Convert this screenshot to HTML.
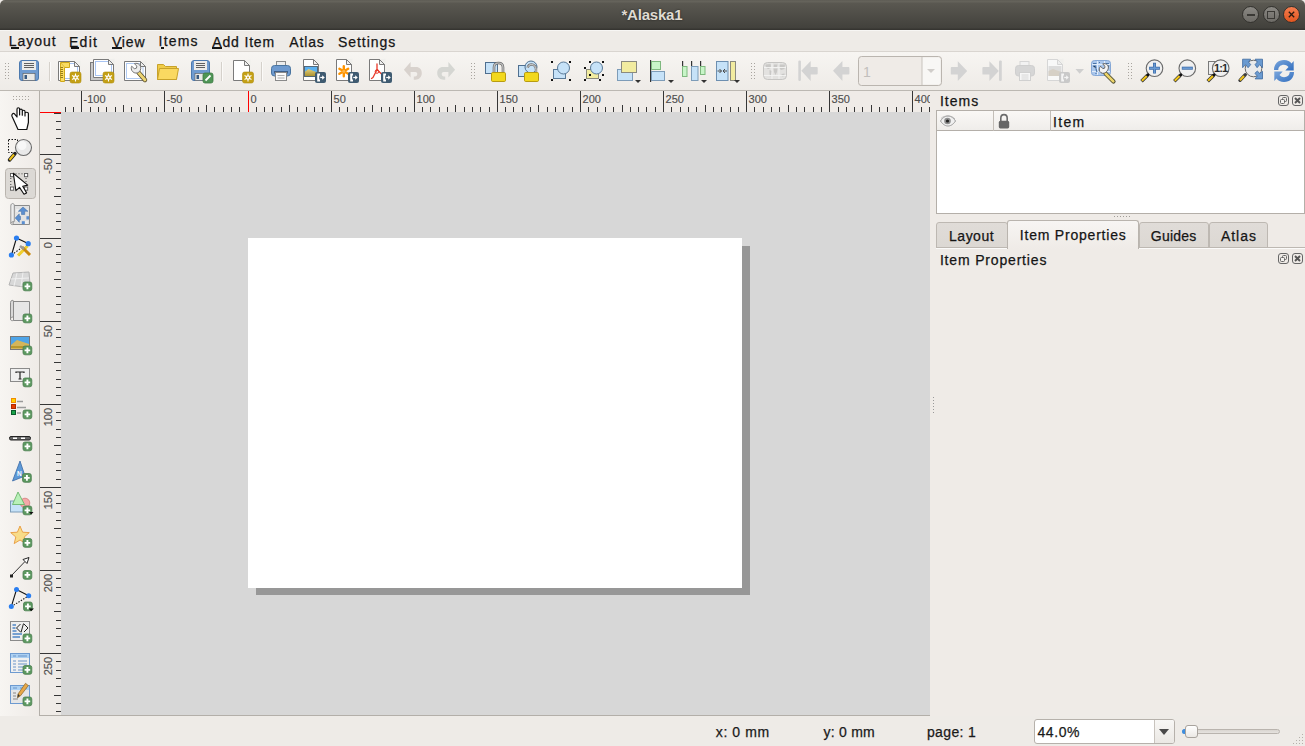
<!DOCTYPE html><html><head><meta charset="utf-8"><style>
*{margin:0;padding:0;box-sizing:border-box}
html,body{width:1305px;height:746px;overflow:hidden;background:#efebe7;font-family:"Liberation Sans",sans-serif;color:#1c1c1c}
.a{position:absolute}
#title{left:0;top:0;width:1305px;height:30px;background:linear-gradient(#5c5a53 0px,#65635b 1px,#65635b 2px,#5a5851 3px,#42413c 28px,#363531 29px,#363531 30px);border-radius:5px 5px 0 0}
#menubar{left:0;top:30px;width:1305px;height:22px;background:#eeebe7;border-top:1px solid #f7f6f4;border-bottom:1px solid #d9d5d0}
.mi{position:absolute;top:3px;font-size:14.5px;color:#151515;white-space:nowrap}
.ul{text-decoration:underline;text-underline-offset:2px}
#toolbar{left:0;top:52px;width:1305px;height:38px;background:linear-gradient(#f7f5f2,#eeebe7)}
#hline{left:0;top:90px;width:1305px;height:1px;background:#bcb8b2}
#ltool{left:0;top:91px;width:39px;height:625px;background:linear-gradient(90deg,#f7f5f2,#efebe7)}
#vborder{left:39px;top:91px;width:1px;height:625px;background:#b3afa9}
#bborder{left:39px;top:715px;width:891px;height:1px;background:#b3afa9}
#hruler{left:40px;top:91px;width:890px;height:21px;background:#efebe7;overflow:hidden}
#vruler{left:40px;top:112px;width:21px;height:603px;background:#efebe7;overflow:hidden}
#canvas{left:61px;top:112px;width:869px;height:603px;background:#d7d7d7;overflow:hidden}
.tk{position:absolute;background:#363636}
.rl{position:absolute;font-size:11px;color:#4e4e4e;white-space:nowrap;line-height:11px;-webkit-text-stroke:0.15px #4e4e4e}
#status{left:0;top:716px;width:1305px;height:30px;background:#eeebe7}
.st{position:absolute;font-size:14.5px;color:#1a1a1a;white-space:nowrap;line-height:17px}
.pt{position:absolute;font-size:14.5px;color:#151515;white-space:nowrap;line-height:17px}
#rpanel{left:930px;top:91px;width:375px;height:625px;background:#efebe7}
</style></head><body>
<div id="title" class="a">
<div class="a" style="left:1242.2px;top:6px;width:17px;height:17px;border-radius:50%;background:linear-gradient(#8a8883,#6d6b66);border:1px solid #33322e"><div class="a" style="left:4px;top:7px;width:8px;height:2px;background:#3a3935"></div></div>
<div class="a" style="left:1262.5px;top:6px;width:17px;height:17px;border-radius:50%;background:linear-gradient(#8a8883,#6d6b66);border:1px solid #33322e"><div class="a" style="left:3.5px;top:4px;width:8px;height:8px;border:1.5px solid #3a3935"></div></div>
<div class="a" style="left:1282.5px;top:6px;width:17px;height:17px;border-radius:50%;background:linear-gradient(#f47d4f,#e2561f);border:1px solid #33322e"><svg class="a" style="left:0;top:0" width="15" height="15"><path d="M4.8 4.8L10.2 10.2M10.2 4.8L4.8 10.2" stroke="#2a1a10" stroke-width="1.3"/></svg></div>
</div>
<div id="menubar" class="a"></div>
<div id="toolbar" class="a"></div>
<div id="hline" class="a"></div>
<div id="ltool" class="a"></div>
<div id="vborder" class="a"></div>
<div id="bborder" class="a"></div>
<svg class="a" style="left:0;top:0" width="1305" height="746" viewBox="0 0 1305 746"><rect x="5" y="63" width="1" height="1" fill="#a9a59f"/><rect x="8" y="63" width="1" height="1" fill="#a9a59f"/><rect x="5" y="66" width="1" height="1" fill="#a9a59f"/><rect x="8" y="66" width="1" height="1" fill="#a9a59f"/><rect x="5" y="69" width="1" height="1" fill="#a9a59f"/><rect x="8" y="69" width="1" height="1" fill="#a9a59f"/><rect x="5" y="72" width="1" height="1" fill="#a9a59f"/><rect x="8" y="72" width="1" height="1" fill="#a9a59f"/><rect x="5" y="75" width="1" height="1" fill="#a9a59f"/><rect x="8" y="75" width="1" height="1" fill="#a9a59f"/><rect x="5" y="78" width="1" height="1" fill="#a9a59f"/><rect x="8" y="78" width="1" height="1" fill="#a9a59f"/><rect x="19.5" y="60.5" width="19" height="20" rx="2.5" fill="#6f9bd0" stroke="#4c79ae"/><rect x="22" y="61" width="14" height="9" fill="#ececea"/><path d="M24 63.5H34" stroke="#505050" stroke-width="0.9"/><path d="M24 65.5H34" stroke="#505050" stroke-width="0.9"/><path d="M24 67.5H34" stroke="#505050" stroke-width="0.9"/><rect x="23" y="73.5" width="12" height="7" fill="#e8e8e6" stroke="#5a5a5a" stroke-width="0.6"/><rect x="24.5" y="75" width="2.5" height="4" fill="#3a5a80"/><rect x="49" y="62" width="1" height="19" fill="#d5d1cb"/><rect x="50" y="62" width="1" height="19" fill="#fbfaf8"/><path d="M58.5 61.5H74.5L79.5 66.5V80.5H58.5Z" fill="#fff" stroke="#7a7a7a" stroke-width="1"/><path d="M64.5 63.5H77.5V78.5H64.5" fill="none" stroke="#a8c4f2"/><path d="M74.5 61.5L80.5 60.5V66.5Z" fill="#f0efec" stroke="none"/><path d="M74.5 61.5V66.5H79.5Z" fill="#eeeeee" stroke="#7a7a7a" stroke-width="1" stroke-linejoin="round"/><path d="M60.5 62.5H69.5V67.5H64.5V81.5H60.5Z" fill="#f9dc62" stroke="#d0a818"/><path d="M61 63L64.5 67" stroke="#d8b430" stroke-width="0.8"/><path d="M60.5 67.5H63" stroke="#8a7010" stroke-width="0.9"/><path d="M60.5 69.5H63" stroke="#8a7010" stroke-width="0.9"/><path d="M60.5 71.5H63" stroke="#8a7010" stroke-width="0.9"/><path d="M60.5 73.5H63" stroke="#8a7010" stroke-width="0.9"/><path d="M60.5 75.5H63" stroke="#8a7010" stroke-width="0.9"/><path d="M60.5 77.5H63" stroke="#8a7010" stroke-width="0.9"/><rect x="70" y="72" width="11" height="11" rx="2" fill="#c4a015" stroke="#b08d0c" stroke-width="0.6"/><path d="M75.5 73.5V81.5M72.0 75.5L79.0 79.5M72.0 79.5L79.0 75.5" stroke="#fff" stroke-width="1.1"/><circle cx="75.5" cy="77.5" r="2.2" fill="#fff"/><circle cx="75.5" cy="77.5" r="1" fill="#c4a015"/><rect x="90.5" y="62.5" width="17" height="18" fill="#c9c9c9" stroke="#7b7b7b"/><path d="M93.5 59.5H108.5L113.5 64.5V77.5H93.5Z" fill="#fff" stroke="#7a7a7a" stroke-width="1"/><rect x="95.5" y="61.5" width="16" height="14" fill="none" stroke="#a8c4f2"/><path d="M108.5 59.5L114.5 58.5V64.5Z" fill="#f0efec" stroke="none"/><path d="M108.5 59.5V64.5H113.5Z" fill="#eeeeee" stroke="#7a7a7a" stroke-width="1" stroke-linejoin="round"/><rect x="103" y="72" width="11" height="11" rx="2" fill="#c4a015" stroke="#b08d0c" stroke-width="0.6"/><path d="M108.5 73.5V81.5M105.0 75.5L112.0 79.5M105.0 79.5L112.0 75.5" stroke="#fff" stroke-width="1.1"/><circle cx="108.5" cy="77.5" r="2.2" fill="#fff"/><circle cx="108.5" cy="77.5" r="1" fill="#c4a015"/><path d="M124.5 61.5H140.5L145.5 66.5V80.5H124.5Z" fill="#fff" stroke="#7a7a7a" stroke-width="1"/><rect x="126.5" y="63.5" width="16.5" height="15" fill="none" stroke="#b0caf2"/><path d="M140.5 61.5L146.5 60.5V66.5Z" fill="#f0efec" stroke="none"/><path d="M140.5 61.5V66.5H145.5Z" fill="#eeeeee" stroke="#7a7a7a" stroke-width="1" stroke-linejoin="round"/><path d="M138.5 72.5L145 80" stroke="#5a5030" stroke-width="4.4" stroke-linecap="round"/><path d="M138.5 72.5L145 80" stroke="#ecd472" stroke-width="2.8" stroke-linecap="round"/><path d="M139.3 71.8C137.4 73.6 134.4 73.5 132.6 71.6C131.1 70 130.9 67.8 131.7 66.2L134.3 68.7L136.4 68.2L136.9 66.1L134.4 63.7C136 63 138.2 63.3 139.5 64.7C141.3 66.6 141.2 69.9 139.3 71.8Z" fill="#ececec" stroke="#6a6a6a" stroke-width="0.9"/><path d="M157.5 64.5H163.5L165.5 66.5H176.5V79.5H157.5Z" fill="#f0cc48" stroke="#c8a22a"/><path d="M159.5 68.5H178.5L176.5 79.5H157.5Z" fill="#fad961" stroke="#c8a22a"/><rect x="191.5" y="60.5" width="18" height="20" rx="2.5" fill="#6f9bd0" stroke="#4c79ae"/><rect x="194" y="61" width="13" height="9" fill="#ececea"/><path d="M196 63.5H205" stroke="#505050" stroke-width="0.9"/><path d="M196 65.5H205" stroke="#505050" stroke-width="0.9"/><path d="M196 67.5H205" stroke="#505050" stroke-width="0.9"/><rect x="195" y="73.5" width="11" height="7" fill="#e8e8e6" stroke="#5a5a5a" stroke-width="0.6"/><rect x="196.5" y="75" width="2.5" height="4" fill="#3a5a80"/><rect x="203" y="73" width="10" height="10" rx="2" fill="#4f9556" stroke="#3c7a43" stroke-width="0.8"/><path d="M205.5 80.5L210.5 75.5" stroke="#fff" stroke-width="1.8"/><rect x="221" y="62" width="1" height="19" fill="#d5d1cb"/><rect x="222" y="62" width="1" height="19" fill="#fbfaf8"/><path d="M233.5 60.5H244.5L249.5 65.5V80.5H233.5Z" fill="#fff" stroke="#7a7a7a" stroke-width="1"/><path d="M244.5 60.5L250.5 59.5V65.5Z" fill="#f0efec" stroke="none"/><path d="M244.5 60.5V65.5H249.5Z" fill="#eeeeee" stroke="#7a7a7a" stroke-width="1" stroke-linejoin="round"/><rect x="242.5" y="72" width="11" height="11" rx="2" fill="#c4a015" stroke="#b08d0c" stroke-width="0.6"/><path d="M248.0 73.5V81.5M244.5 75.5L251.5 79.5M244.5 79.5L251.5 75.5" stroke="#fff" stroke-width="1.1"/><circle cx="248.0" cy="77.5" r="2.2" fill="#fff"/><circle cx="248.0" cy="77.5" r="1" fill="#c4a015"/><rect x="261" y="62" width="1" height="19" fill="#d5d1cb"/><rect x="262" y="62" width="1" height="19" fill="#fbfaf8"/><rect x="276.5" y="61.5" width="9" height="7" fill="#ededed" stroke="#8a8a8a"/><rect x="271.5" y="65.5" width="19" height="10.5" rx="3" fill="#6e9acf" stroke="#49749f"/><rect x="274" y="71" width="14" height="2.5" fill="#3f5f88"/><rect x="275.5" y="72.5" width="11" height="8" fill="#fafafa" stroke="#8a8a8a"/><path d="M277.5 75.5H284.5M277.5 78H284.5" stroke="#9a9a9a" stroke-width="0.8"/><path d="M303.5 59.5H313.5L318.5 64.5V80.5H303.5Z" fill="#fff" stroke="#7a7a7a" stroke-width="1"/><path d="M313.5 59.5L319.5 58.5V64.5Z" fill="#f0efec" stroke="none"/><path d="M313.5 59.5V64.5H318.5Z" fill="#eeeeee" stroke="#7a7a7a" stroke-width="1" stroke-linejoin="round"/><defs><linearGradient id="hill" x1="0" y1="0" x2="0" y2="1"><stop offset="0" stop-color="#e2cf7a"/><stop offset="1" stop-color="#a88e2c"/></linearGradient></defs><rect x="304.5" y="66.5" width="13" height="10" fill="#5ab0f0"/><path d="M304.5 72L308.5 69L317.5 72.5V76.5H304.5Z" fill="url(#hill)"/><rect x="304.5" y="66.5" width="13" height="10" fill="none" stroke="#4a5f70" stroke-width="0.9"/><rect x="315" y="72" width="11" height="11" rx="2" fill="#3f5b71"/><path d="M320 74.5H318.2V80.5H320" fill="none" stroke="#fff" stroke-width="2"/><path d="M320.2 77.5H323.2" stroke="#fff" stroke-width="1.2"/><path d="M322.2 75.2L324.8 77.5L322.2 79.8Z" fill="#fff"/><path d="M336.5 59.5H346.5L351.5 64.5V80.5H336.5Z" fill="#fff" stroke="#7a7a7a" stroke-width="1"/><path d="M346.5 59.5L352.5 58.5V64.5Z" fill="#f0efec" stroke="none"/><path d="M346.5 59.5V64.5H351.5Z" fill="#eeeeee" stroke="#7a7a7a" stroke-width="1" stroke-linejoin="round"/><path d="M343.8 71.3V66.3M343.8 71.3V76.3M343.8 71.3L339.4 68.8M343.8 71.3L348.2 68.8M343.8 71.3L339.4 73.8M343.8 71.3L348.2 73.8" stroke="#ff9400" stroke-width="2.4" stroke-linecap="round"/><circle cx="343.8" cy="71.3" r="1.5" fill="#ffb84a"/><rect x="348" y="72" width="11" height="11" rx="2" fill="#3f5b71"/><path d="M353 74.5H351.2V80.5H353" fill="none" stroke="#fff" stroke-width="2"/><path d="M353.2 77.5H356.2" stroke="#fff" stroke-width="1.2"/><path d="M355.2 75.2L357.8 77.5L355.2 79.8Z" fill="#fff"/><path d="M369.5 59.5H379.5L384.5 64.5V80.5H369.5Z" fill="#fff" stroke="#7a7a7a" stroke-width="1"/><path d="M379.5 59.5L385.5 58.5V64.5Z" fill="#f0efec" stroke="none"/><path d="M379.5 59.5V64.5H384.5Z" fill="#eeeeee" stroke="#7a7a7a" stroke-width="1" stroke-linejoin="round"/><path d="M377 64V69.5L373 77.5M377 69.5L381.5 74M373 77.5L371.5 78.5" fill="none" stroke="#e8392a" stroke-width="1.3" stroke-linecap="round"/><circle cx="377" cy="71.5" r="1.8" fill="none" stroke="#e8392a" stroke-width="1"/><rect x="381" y="72" width="11" height="11" rx="2" fill="#3f5b71"/><path d="M386 74.5H384.2V80.5H386" fill="none" stroke="#fff" stroke-width="2"/><path d="M386.2 77.5H389.2" stroke="#fff" stroke-width="1.2"/><path d="M388.2 75.2L390.8 77.5L388.2 79.8Z" fill="#fff"/><path d="M403.9 69.8L410.6 62V67H416C419.5 67 421.8 69.5 421.8 73C421.8 77 419 79.7 415.5 79.7H413.8V76.5H415C416.5 76.5 417.3 75.5 417.3 74C417.3 72.8 416.5 72 415.3 72H410.6V77.6Z" fill="#d8d2cd"/><path d="M455.1 69.8L448.4 62V67H443C439.5 67 437.2 69.5 437.2 73C437.2 77 440 79.7 443.5 79.7H445.2V76.5H444C442.5 76.5 441.7 75.5 441.7 74C441.7 72.8 442.5 72 443.7 72H448.4V77.6Z" fill="#d5d6d2"/><rect x="471" y="63" width="1" height="1" fill="#a9a59f"/><rect x="474" y="63" width="1" height="1" fill="#a9a59f"/><rect x="471" y="66" width="1" height="1" fill="#a9a59f"/><rect x="474" y="66" width="1" height="1" fill="#a9a59f"/><rect x="471" y="69" width="1" height="1" fill="#a9a59f"/><rect x="474" y="69" width="1" height="1" fill="#a9a59f"/><rect x="471" y="72" width="1" height="1" fill="#a9a59f"/><rect x="474" y="72" width="1" height="1" fill="#a9a59f"/><rect x="471" y="75" width="1" height="1" fill="#a9a59f"/><rect x="474" y="75" width="1" height="1" fill="#a9a59f"/><rect x="471" y="78" width="1" height="1" fill="#a9a59f"/><rect x="474" y="78" width="1" height="1" fill="#a9a59f"/><rect x="485.5" y="62.5" width="12" height="11" fill="#c6e2f8" stroke="#4f6f8f"/><path d="M494 73V67.5C494 64.5 496 63 498.5 63S503 64.5 503 67.5V73" fill="none" stroke="#6a6a6a" stroke-width="2.6"/><path d="M494 73V67.5C494 64.5 496 63 498.5 63S503 64.5 503 67.5V73" fill="none" stroke="#c8c8c8" stroke-width="1.2"/><rect x="491.5" y="72.5" width="14" height="9" rx="1.2" fill="#f2d81d" stroke="#b89c10"/><rect x="518.5" y="65.5" width="9" height="11" fill="#c6e2f8" stroke="#4f6f8f"/><circle cx="531" cy="67" r="6" fill="#c6e2f8" stroke="#4f6f8f"/><path d="M536 73V69.5C536 66.5 534 64.5 531.5 64.5C529.5 64.5 528 65.8 527.6 67.8" fill="none" stroke="#777" stroke-width="2.4"/><path d="M536 73V69.5C536 66.5 534 64.5 531.5 64.5C529.5 64.5 528 65.8 527.6 67.8" fill="none" stroke="#d8d8d8" stroke-width="1.0"/><rect x="524.5" y="72.5" width="14" height="9" rx="1.2" fill="#f2d81d" stroke="#b89c10"/><rect x="553.5" y="69.5" width="12" height="9" fill="#c6e2f8" stroke="#5a7a98"/><circle cx="563.5" cy="68" r="6" fill="#c6e2f8" stroke="#5a7a98"/><rect x="551" y="61" width="2" height="2" fill="#111"/><rect x="569" y="61" width="2" height="2" fill="#111"/><rect x="551" y="79" width="2" height="2" fill="#111"/><rect x="569" y="79" width="2" height="2" fill="#111"/><rect x="586.5" y="69.5" width="12" height="9" fill="#f2eca0" stroke="#8a8a7a"/><circle cx="596.5" cy="68" r="6" fill="#c6e2f8" stroke="#5a7a98"/><rect x="589" y="61" width="2" height="2" fill="#111"/><rect x="602" y="61" width="2" height="2" fill="#111"/><rect x="584" y="67" width="2" height="2" fill="#111"/><rect x="602" y="74" width="2" height="2" fill="#111"/><rect x="589" y="74" width="2" height="2" fill="#111"/><rect x="584" y="79" width="2" height="2" fill="#111"/><rect x="599" y="79" width="2" height="2" fill="#111"/><rect x="617.5" y="69.5" width="15" height="11" fill="#c6e2f8" stroke="#7d9cb8"/><rect x="621.5" y="61.5" width="15" height="11" fill="#f2eca0" stroke="#8a8a80"/><path d="M635 80H641L638 83Z" fill="#333"/><rect x="650" y="60" width="1.2" height="22" fill="#333"/><rect x="651.5" y="61.5" width="9" height="8" fill="#c8f5c8" stroke="#7fb87f"/><rect x="651.5" y="71.5" width="13" height="9" fill="#c6e2f8" stroke="#7d9cb8"/><path d="M668 80H674L671 83Z" fill="#333"/><rect x="682" y="61" width="1.2" height="8" fill="#333"/><rect x="691" y="61" width="1.2" height="8" fill="#333"/><rect x="700" y="61" width="1.2" height="8" fill="#333"/><rect x="682.5" y="66.5" width="4.5" height="10" fill="#c8f5c8" stroke="#7fb87f"/><rect x="691.5" y="66.5" width="6.5" height="14" fill="#c6e2f8" stroke="#7d9cb8"/><rect x="700.5" y="66.5" width="4.5" height="8" fill="#c8f5c8" stroke="#7fb87f"/><path d="M701 80H707L704 83Z" fill="#333"/><rect x="716.5" y="61.5" width="11.5" height="19" fill="#c6e2f8" stroke="#6d8fb0"/><rect x="730.5" y="61.5" width="5" height="19" fill="#f2eca0" stroke="#8a8a80"/><path d="M717.5 71H721.5M719.5 69L721.5 71L719.5 73M727 71H723M725 69L723 71L725 73" fill="none" stroke="#4a4a4a" stroke-width="1"/><path d="M734 80H740L737 83Z" fill="#333"/><rect x="751" y="63" width="1" height="1" fill="#a9a59f"/><rect x="754" y="63" width="1" height="1" fill="#a9a59f"/><rect x="751" y="66" width="1" height="1" fill="#a9a59f"/><rect x="754" y="66" width="1" height="1" fill="#a9a59f"/><rect x="751" y="69" width="1" height="1" fill="#a9a59f"/><rect x="754" y="69" width="1" height="1" fill="#a9a59f"/><rect x="751" y="72" width="1" height="1" fill="#a9a59f"/><rect x="754" y="72" width="1" height="1" fill="#a9a59f"/><rect x="751" y="75" width="1" height="1" fill="#a9a59f"/><rect x="754" y="75" width="1" height="1" fill="#a9a59f"/><rect x="751" y="78" width="1" height="1" fill="#a9a59f"/><rect x="754" y="78" width="1" height="1" fill="#a9a59f"/><rect x="763.5" y="62.5" width="23" height="17" rx="4" fill="#e3e2e0" stroke="#c6c5c3"/><path d="M765.5 64.5L770.5 64L771 66.5L769 69L767 68.5L765.5 66Z M769.5 70L772 71L771 75L770 77L769.5 73Z M774 64.5L777.5 64.5L777 67L775 67.5L773.5 66.5Z M773.5 68.5L777.5 68.5L777 72L775.5 75L774 72Z M778.5 64.5L785 64.5L784.5 69L781 70L779 68Z M781.5 74L784.5 73.5L784.5 76L782 76.5Z" fill="#c9c8c6"/><path d="M772 63V79M779 63V79M764 67.5H786M764 75.5H786" stroke="#f4f4f3" stroke-width="0.9"/><rect x="798.3" y="60.5" width="2.6" height="20.5" rx="1.2" fill="#d3d3d3"/><path d="M801.3 70.7L810.7 61V66.9H816.7C817.5 66.9 817.7 67.5 817.7 68.2V73.2C817.7 74 817.5 74.4 816.7 74.4H810.7V80.9Z" fill="#d3d3d3"/><path d="M833 70.7L842.4 61V66.9H848.4C849.2 66.9 849.4 67.5 849.4 68.2V73.2C849.4 74 849.2 74.4 848.4 74.4H842.4V80.9Z" fill="#d3d3d3"/><rect x="858.5" y="56.5" width="83" height="29" rx="3" fill="#efebe7" stroke="#bab5af"/><path d="M922 57.5H938C940 57.5 940.5 58.5 940.5 60.5V81.5C940.5 83.5 940 84.5 938 84.5H922Z" fill="#f8f7f5"/><rect x="921.5" y="57" width="1" height="28" fill="#c8c3bd"/><path d="M927 69H935L931 73Z" fill="#d0cdca"/><text x="863" y="77" font-family="Liberation Sans" font-size="14" fill="#c2bfbc">1</text><path d="M967.2 70.9L957.8 61.2V67.1H951.8C951 67.1 950.8 67.7 950.8 68.4V73.4C950.8 74.2 951 74.6 951.8 74.6H957.8V81Z" fill="#d3d3d3"/><path d="M998.8 70.9L989.4 61.2V67.1H983.4C982.6 67.1 982.4 67.7 982.4 68.4V73.4C982.4 74.2 982.6 74.6 983.4 74.6H989.4V81Z" fill="#d3d3d3"/><rect x="999" y="60.4" width="2.8" height="20.5" rx="1.2" fill="#d3d3d3"/><rect x="1020" y="61.5" width="9" height="7" fill="#f2f2f2" stroke="#d6d6d6"/><rect x="1015.5" y="65.5" width="19" height="10.5" rx="3" fill="#d6d6d6" stroke="#cfcfcf"/><rect x="1019.5" y="72.5" width="11" height="8" fill="#f6f6f6" stroke="#d0d0d0"/><path d="M1021.5 75H1028.5M1021.5 77H1028.5M1021.5 79H1028.5" stroke="#d0d0d0" stroke-width="0.8"/><path d="M1047.5 59.5H1057.5L1062.5 64.5V80.5H1047.5Z" fill="#f8f8f8" stroke="#d6d6d6" stroke-width="1"/><path d="M1057.5 59.5L1063.5 58.5V64.5Z" fill="#f0efec" stroke="none"/><path d="M1057.5 59.5V64.5H1062.5Z" fill="#eeeeee" stroke="#d6d6d6" stroke-width="1" stroke-linejoin="round"/><rect x="1048.5" y="66" width="13" height="10" fill="#dcdcdc"/><path d="M1048.5 71L1053 69L1061.5 72V76H1048.5Z" fill="#d6d0c6"/><rect x="1059" y="72" width="11" height="11" rx="2" fill="#c9c9c9"/><path d="M1064 74.5H1062.2V80.5H1064" fill="none" stroke="#f4f4f4" stroke-width="2"/><path d="M1064.2 77.5H1067.2" stroke="#f4f4f4" stroke-width="1.2"/><path d="M1066.2 75.2L1068.8 77.5L1066.2 79.8Z" fill="#f4f4f4"/><path d="M1075.5 69H1084L1079.7 73.8Z" fill="#cfcfcf"/><rect x="1091.5" y="60.5" width="19" height="15" rx="3" fill="#aac7ed" stroke="#86a8d6"/><path d="M1097.5 61V75M1104.5 61V75M1092 64.5H1110M1092 71.5H1110" stroke="#e8f0fa" stroke-width="0.9"/><path d="M1093 63.5H1096.5M1093 66H1095.5L1096 68.5M1099 62.5H1100M1106 63.5H1109M1105.5 66H1108.5L1107 69M1096 69L1097 72M1096 73V74" stroke="#4a74a8" stroke-width="1.2"/><path d="M1105.5 73.5L1113.5 81.5" stroke="#4a4a30" stroke-width="4.2" stroke-linecap="round"/><path d="M1105.5 73.5L1113.3 81.3" stroke="#ecd46a" stroke-width="2.6" stroke-linecap="round"/><path d="M1105.8 72.3C1104 74 1101 73.5 1099.8 71.5C1098.8 69.8 1099.2 67.6 1100.6 66.3L1102.8 68.6L1104.6 68.2L1105 66.3L1102.7 64C1104.2 63.3 1106.2 63.6 1107.4 64.9C1109 66.6 1108.8 69.8 1105.8 72.3Z" fill="#f4f4f4" stroke="#555" stroke-width="0.9"/><rect x="1128" y="63" width="1" height="1" fill="#a9a59f"/><rect x="1131" y="63" width="1" height="1" fill="#a9a59f"/><rect x="1128" y="66" width="1" height="1" fill="#a9a59f"/><rect x="1131" y="66" width="1" height="1" fill="#a9a59f"/><rect x="1128" y="69" width="1" height="1" fill="#a9a59f"/><rect x="1131" y="69" width="1" height="1" fill="#a9a59f"/><rect x="1128" y="72" width="1" height="1" fill="#a9a59f"/><rect x="1131" y="72" width="1" height="1" fill="#a9a59f"/><rect x="1128" y="75" width="1" height="1" fill="#a9a59f"/><rect x="1131" y="75" width="1" height="1" fill="#a9a59f"/><rect x="1128" y="78" width="1" height="1" fill="#a9a59f"/><rect x="1131" y="78" width="1" height="1" fill="#a9a59f"/><path d="M1147.524 75.176L1141.524 81.176" stroke="#333" stroke-width="3.4" stroke-linecap="butt"/><path d="M1146.724 75.976L1141.924 80.776" stroke="#f2c619" stroke-width="2" stroke-linecap="butt"/><circle cx="1154.5" cy="68.2" r="8.3" fill="#f0f0f0" stroke="#6a6a6a" stroke-width="1.1"/><circle cx="1147.924" cy="74.776" r="1.5" fill="#111"/><path d="M1154.5 62.8V73.6M1149.1 68.2H1159.9" stroke="#3a6aa8" stroke-width="3"/><path d="M1154.5 63.4V73M1149.7 68.2H1159.3" stroke="#6a9ad2" stroke-width="1.6"/><path d="M1180.3239999999998 75.176L1174.3239999999998 81.176" stroke="#333" stroke-width="3.4" stroke-linecap="butt"/><path d="M1179.524 75.976L1174.724 80.776" stroke="#f2c619" stroke-width="2" stroke-linecap="butt"/><circle cx="1187.3" cy="68.2" r="8.3" fill="#f0f0f0" stroke="#6a6a6a" stroke-width="1.1"/><circle cx="1180.724" cy="74.776" r="1.5" fill="#111"/><path d="M1181.8 68.2H1192.8" stroke="#3a6aa8" stroke-width="3"/><path d="M1182.4 68.2H1192.2" stroke="#6a9ad2" stroke-width="1.6"/><rect x="1208.5" y="61.5" width="9" height="13" fill="#eeeeee" stroke="#7a7a7a"/><path d="M1213.724 75.176L1207.724 81.176" stroke="#333" stroke-width="3.4" stroke-linecap="butt"/><path d="M1212.924 75.976L1208.124 80.776" stroke="#f2c619" stroke-width="2" stroke-linecap="butt"/><circle cx="1220.7" cy="68.2" r="8.3" fill="#f0f0f0" stroke="#6a6a6a" stroke-width="1.1"/><circle cx="1214.124" cy="74.776" r="1.5" fill="#111"/><text x="1220.7" y="72" text-anchor="middle" font-family="Liberation Sans" font-weight="bold" font-size="11" fill="#2a2a2a" letter-spacing="-0.8">1:1</text><path d="M1245.3 74.7L1240 80.3" stroke="#3d3d3d" stroke-width="3.4" stroke-linecap="round"/><path d="M1244 76L1240 80.3" stroke="#f0c419" stroke-width="2"/><circle cx="1253.5" cy="68.5" r="8.3" fill="#ebebeb" stroke="#6a6a6a" stroke-width="1"/><path d="M1242.6 59.2H1250.7L1248.5 62L1250.7 64.6L1248.1 67.7L1245.6 64.6L1242.6 67.7Z M1255.1 59.2H1262.5V67.7L1259.7 64.6L1257.1 67.7L1255.1 64.6L1257.3 62Z M1262.5 71.3V78.9H1255.1L1257.3 76.1L1254.9 73.3L1257.3 71.1L1259.7 73.3Z" fill="#6a9ad0" stroke="#3e6aa0" stroke-width="0.8" stroke-linejoin="round"/><defs><linearGradient id="rg" x1="0" y1="0" x2="1" y2="1"><stop offset="0" stop-color="#7aa6dc"/><stop offset="1" stop-color="#336fbf"/></linearGradient></defs><path d="M1274 70C1274 64 1278 60 1284 60C1287.5 60 1290 61.5 1291.5 63.5L1293.7 61V70.5H1285.3L1288.5 67C1287 65.5 1285.5 64.8 1284 64.8C1280.5 64.8 1278.3 67 1278.3 70Z" fill="url(#rg)"/><path d="M1294 72C1294 78 1290 82 1284 82C1280.5 82 1278 80.5 1276.5 78.5L1274.3 81V71.5H1282.7L1279.5 75C1281 76.5 1282.5 77.2 1284 77.2C1287.5 77.2 1289.7 75 1289.7 72Z" fill="url(#rg)"/><rect x="13" y="96" width="1" height="1" fill="#aaa6a0"/><rect x="13" y="99" width="1" height="1" fill="#aaa6a0"/><rect x="16" y="96" width="1" height="1" fill="#aaa6a0"/><rect x="16" y="99" width="1" height="1" fill="#aaa6a0"/><rect x="19" y="96" width="1" height="1" fill="#aaa6a0"/><rect x="19" y="99" width="1" height="1" fill="#aaa6a0"/><rect x="22" y="96" width="1" height="1" fill="#aaa6a0"/><rect x="22" y="99" width="1" height="1" fill="#aaa6a0"/><rect x="25" y="96" width="1" height="1" fill="#aaa6a0"/><rect x="25" y="99" width="1" height="1" fill="#aaa6a0"/><rect x="28" y="96" width="1" height="1" fill="#aaa6a0"/><rect x="28" y="99" width="1" height="1" fill="#aaa6a0"/><path d="M18 129.5L12 116.3C11.3 114.6 12.8 112.8 14.5 113.8L17 117V109.3C17 107.2 19.6 107.2 19.6 109.3V115V110.6C19.6 108.6 22.3 108.6 22.3 110.6V115.2V111.6C22.3 109.8 25 109.8 25 111.6V116V113.6C25 111.8 28.4 111.8 28.4 113.6V122.5L26.8 129.5Z" fill="#fff" stroke="#111" stroke-width="1.2" stroke-linejoin="round"/><rect x="8.5" y="139.5" width="9" height="13" fill="none" stroke="#111" stroke-dasharray="1.5 1.5"/><path d="M15 153.5L9.5 160" stroke="#222" stroke-width="3.5" stroke-linecap="round"/><path d="M14 154.5L9.5 160" stroke="#f0c419" stroke-width="2"/><circle cx="23.5" cy="147.5" r="8" fill="#e9e9e9" stroke="#6a6a6a" stroke-width="1.1"/><circle cx="22" cy="145.5" r="4.5" fill="#f7f7f7"/><rect x="5.5" y="168.5" width="30" height="30" rx="3" fill="#dcd9d5" stroke="#bab5af"/><path d="M15.5 173.8H24M10.8 178V187M26 178V186M15 188.6H24" fill="none" stroke="#333" stroke-width="0.9" stroke-dasharray="1 2"/><rect x="10.5" y="173.5" width="3.2" height="3.2" fill="#fff" stroke="#555" stroke-width="0.9"/><rect x="24.5" y="173.5" width="3.2" height="3.2" fill="#fff" stroke="#555" stroke-width="0.9"/><rect x="10.5" y="187" width="3.2" height="3.2" fill="#fff" stroke="#555" stroke-width="0.9"/><rect x="24.5" y="187" width="3.2" height="3.2" fill="#fff" stroke="#555" stroke-width="0.9"/><path d="M13.3 173.3L27.7 185.1L22.7 186.3L26.6 192.9L24 194.3L19.5 187.4L15.9 190.6Z" fill="#fff" stroke="#111" stroke-width="1.1" stroke-linejoin="round"/><path d="M14 205.5H29.5V224.5H13Z" fill="#e2e2e2" stroke="#8c8c8c"/><path d="M16 209H19V212H16ZM25 209H28V212H25ZM19 212H22V215H19ZM16 218H19V221H16ZM25 221H28V224H25Z" fill="#eeeeee"/><path d="M10.8 206C10.8 204 12 203.5 12.6 203.5C13.6 203.5 14.3 204.3 14.3 205.5V221.5C13 221.5 10.8 222 10.8 223.5Z" fill="#ededed" stroke="#8c8c8c" stroke-width="0.9"/><path d="M10.8 223.5C10.8 224.5 12 224.8 13.5 224.5" fill="none" stroke="#8c8c8c" stroke-width="0.9"/><path d="M23 207L28 211.3H24.7V214.5H21.4V211.3H18.3Z" fill="#5a8ed0" stroke="#3e6aa0" stroke-width="0.5"/><path d="M15.2 218L19.3 213.8V216.3H20.5V219.7H19.3V222.3Z" fill="#5a8ed0" stroke="#3e6aa0" stroke-width="0.5"/><rect x="26.4" y="216.2" width="2.6" height="3.3" fill="#5a8ed0"/><rect x="21.8" y="221.2" width="3" height="3" fill="#5a8ed0"/><path d="M16.5 238L11.5 255M16.5 238L28 243.5" stroke="#111" stroke-width="1.1"/><path d="M11.5 255L20 249" stroke="#111" stroke-width="1.1" stroke-dasharray="1.5 1.5"/><path d="M19 256L27 245" stroke="#555" stroke-width="1"/><path d="M18 255.5L27.5 246" stroke="#f0d030" stroke-width="3"/><path d="M22 247L30 255" stroke="#c8880e" stroke-width="3"/><path d="M20 246L24 249" stroke="#999" stroke-width="2.5"/><circle cx="16.5" cy="238" r="2.6" fill="#2a7ef0"/><circle cx="28.2" cy="243.7" r="2.6" fill="#2a7ef0"/><circle cx="11.4" cy="255" r="2.6" fill="#2a7ef0"/><path d="M13 273L29 272L30 284L24 287L9 285Z" fill="#d8d8d8" stroke="#b4b4b4"/><path d="M11 279L29 278M17 273L14 286M23 272.5L21 286.5" stroke="#f2f2f2" stroke-width="0.9"/><rect x="23" y="282" width="8.8" height="8.8" rx="2" fill="#5b985f" stroke="#4c7f50" stroke-width="0.8"/><path d="M27.4 283.6V289.2M24.6 286.4H30.2" stroke="#fff" stroke-width="1.9"/><path d="M13.5 301.5H29.5V320.5H13.5Z" fill="#e6e6e6" stroke="#8a8a8a"/><path d="M10.5 302.5C10.5 300 13.5 300 13.5 301V317C12 317 10.5 317.5 10.5 319V302.5Z" fill="#d8d8d8" stroke="#8a8a8a"/><path d="M10.5 319C10.5 320.8 12 320.8 13.5 320.5" fill="none" stroke="#8a8a8a"/><rect x="23" y="314" width="8.8" height="8.8" rx="2" fill="#5b985f" stroke="#4c7f50" stroke-width="0.8"/><path d="M27.4 315.6V321.2M24.6 318.4H30.2" stroke="#fff" stroke-width="1.9"/><rect x="10.5" y="336.5" width="19" height="13" fill="#4ea4e8" stroke="#777"/><path d="M11 345L17 340L29 344V349H11Z" fill="#d4b55a"/><path d="M11 347H29" stroke="#b8982e" stroke-width="2"/><rect x="23" y="346" width="8.8" height="8.8" rx="2" fill="#5b985f" stroke="#4c7f50" stroke-width="0.8"/><path d="M27.4 347.6V353.2M24.6 350.4H30.2" stroke="#fff" stroke-width="1.9"/><rect x="10.5" y="368.5" width="19" height="13" fill="#efefef" stroke="#8a8a8a"/><path d="M16 372H24M16 371.5V373M24 371.5V373M20 372V379M18.5 379H21.5" stroke="#222" stroke-width="1.2"/><rect x="23" y="378" width="8.8" height="8.8" rx="2" fill="#5b985f" stroke="#4c7f50" stroke-width="0.8"/><path d="M27.4 379.6V385.2M24.6 382.4H30.2" stroke="#fff" stroke-width="1.9"/><rect x="11.5" y="398.5" width="4" height="4" fill="#ffd400" stroke="#f08c00"/><rect x="11.5" y="404.5" width="4" height="4" fill="#e53e00" stroke="#b02800"/><rect x="11.5" y="410.5" width="4" height="4" fill="#1aa34a" stroke="#0a5a2a"/><path d="M17 401.5H23M17 407.5H26M17 413H21" stroke="#9a9a9a" stroke-width="1.4"/><rect x="23" y="410" width="8.8" height="8.8" rx="2" fill="#5b985f" stroke="#4c7f50" stroke-width="0.8"/><path d="M27.4 411.6V417.2M24.6 414.4H30.2" stroke="#fff" stroke-width="1.9"/><rect x="9.5" y="436.5" width="21" height="3.5" rx="1.5" fill="#666" stroke="#222"/><path d="M13 438.2H17M21 438.2H25" stroke="#fff" stroke-width="1.6"/><rect x="23" y="442" width="8.8" height="8.8" rx="2" fill="#5b985f" stroke="#4c7f50" stroke-width="0.8"/><path d="M27.4 443.6V449.2M24.6 446.4H30.2" stroke="#fff" stroke-width="1.9"/><path d="M20 461L25 476L12.5 481Z" fill="#5e9ad8" stroke="#3b6aa5" stroke-width="0.8"/><text x="19.3" y="476" text-anchor="middle" font-family="Liberation Sans" font-weight="bold" font-size="6.5" fill="#fff">N</text><rect x="22.5" y="473.5" width="8.8" height="8.8" rx="2" fill="#5b985f" stroke="#4c7f50" stroke-width="0.8"/><path d="M26.9 475.1V480.7M24.1 477.9H29.7" stroke="#fff" stroke-width="1.9"/><rect x="10.5" y="501" width="13" height="11" fill="#c6e2f8" stroke="#7d9cb8"/><circle cx="25" cy="503" r="4.8" fill="#f5a8a8" stroke="#d07070" stroke-width="0.7"/><path d="M18 492L24.5 504.5H12.5Z" fill="#b8f0b8" stroke="#5fae5f" stroke-width="0.8"/><rect x="23" y="506" width="8.8" height="8.8" rx="2" fill="#5b985f" stroke="#4c7f50" stroke-width="0.8"/><path d="M27.4 507.6V513.1999999999999M24.6 510.4H30.2" stroke="#fff" stroke-width="1.9"/><path d="M29 512H33.5L31.2 514.5Z" fill="#111"/><path d="M20 526L22.6 532.2L29.3 532.6L24.2 537L25.8 543.6L20 540L14.2 543.6L15.8 537L10.7 532.6L17.4 532.2Z" fill="#f8dc88" stroke="#e89a3c" stroke-width="0.9"/><rect x="23" y="538.5" width="8.8" height="8.8" rx="2" fill="#5b985f" stroke="#4c7f50" stroke-width="0.8"/><path d="M27.4 540.1V545.6999999999999M24.6 542.9H30.2" stroke="#fff" stroke-width="1.9"/><path d="M11.5 575.5L25 561.5" stroke="#333" stroke-width="1"/><path d="M29 557.5L23 559.5L27 563.5Z" fill="#fff" stroke="#222" stroke-width="1"/><rect x="10" y="574.5" width="3" height="3" fill="#222"/><rect x="23" y="570.5" width="8.8" height="8.8" rx="2" fill="#5b985f" stroke="#4c7f50" stroke-width="0.8"/><path d="M27.4 572.1V577.6999999999999M24.6 574.9H30.2" stroke="#fff" stroke-width="1.9"/><path d="M11.3 606.6L16.5 589.6L28.7 595.8" fill="none" stroke="#111" stroke-width="1.1"/><path d="M11.3 606.6L28.7 595.8" stroke="#111" stroke-width="1.1" stroke-dasharray="1.4 1.4"/><circle cx="16.5" cy="589.6" r="2.5" fill="#2a7ef0"/><circle cx="28.7" cy="595.8" r="2.5" fill="#2a7ef0"/><circle cx="11.3" cy="606.6" r="2.5" fill="#2a7ef0"/><rect x="23.5" y="602" width="8.8" height="8.8" rx="2" fill="#5b985f" stroke="#4c7f50" stroke-width="0.8"/><path d="M27.9 603.6V609.1999999999999M25.1 606.4H30.699999999999996" stroke="#fff" stroke-width="1.9"/><path d="M28.5 608.5H34L31.2 611.3Z" fill="#111"/><rect x="10.5" y="621.5" width="19" height="19" fill="#eeeeee" stroke="#8a8a8a"/><path d="M12.5 625H16M12.5 628H15.5M12.5 631H16.5M12.5 634H22M12.5 637H20" stroke="#4f86c6" stroke-width="1.3"/><path d="M20.5 624L16.5 628L20.5 632M24 624L28 628L24 632M23.5 623.5L21 632.5" fill="none" stroke="#222" stroke-width="1"/><rect x="23" y="634" width="8.8" height="8.8" rx="2" fill="#5b985f" stroke="#4c7f50" stroke-width="0.8"/><path d="M27.4 635.6V641.1999999999999M24.6 638.4H30.2" stroke="#fff" stroke-width="1.9"/><rect x="10.5" y="653.5" width="19" height="19" fill="#f0f0f0" stroke="#6d9ad0"/><rect x="11" y="654" width="18" height="4" fill="#acd0f2"/><path d="M13 656H16M18 656H27M13 661H16M18 661H27M13 664H16M18 664H27M13 667H16M18 667H27M13 670H16M18 670H27" stroke="#6a94c8" stroke-width="1.1"/><rect x="23" y="665.5" width="8.8" height="8.8" rx="2" fill="#5b985f" stroke="#4c7f50" stroke-width="0.8"/><path d="M27.4 667.1V672.6999999999999M24.6 669.9H30.2" stroke="#fff" stroke-width="1.9"/><rect x="10.5" y="685.5" width="19" height="18" fill="#e6e6e6" stroke="#6d9ad0"/><rect x="11" y="686" width="18" height="4" fill="#acd0f2"/><path d="M13 688H17M20 688H27" stroke="#6a94c8" stroke-width="1.1"/><path d="M13 693H16M13 696H16M13 699H18" stroke="#888" stroke-width="1"/><path d="M25.5 683.3L28.3 685.6L20.5 695.8L17.5 697.8L18 694Z" fill="#e8a848" stroke="#8a6424" stroke-width="0.7"/><path d="M17.5 697.8L18 694L19.8 695.6Z" fill="#333"/><rect x="23" y="697" width="8.8" height="8.8" rx="2" fill="#5b985f" stroke="#4c7f50" stroke-width="0.8"/><path d="M27.4 698.6V704.1999999999999M24.6 701.4H30.2" stroke="#fff" stroke-width="1.9"/></svg>
<div id="hruler" class="a">
<div class="tk" style="left:25px;top:16px;width:1px;height:5px"></div>
<div class="tk" style="left:33px;top:16px;width:1px;height:5px"></div>
<div class="tk" style="left:41px;top:0;width:1px;height:21px"></div>
<div class="rl" style="left:43.6px;top:3px">-100</div>
<div class="tk" style="left:50px;top:16px;width:1px;height:5px"></div>
<div class="tk" style="left:58px;top:16px;width:1px;height:5px"></div>
<div class="tk" style="left:66px;top:16px;width:1px;height:5px"></div>
<div class="tk" style="left:75px;top:16px;width:1px;height:5px"></div>
<div class="tk" style="left:83px;top:14px;width:1px;height:7px"></div>
<div class="tk" style="left:91px;top:16px;width:1px;height:5px"></div>
<div class="tk" style="left:100px;top:16px;width:1px;height:5px"></div>
<div class="tk" style="left:108px;top:16px;width:1px;height:5px"></div>
<div class="tk" style="left:116px;top:16px;width:1px;height:5px"></div>
<div class="tk" style="left:124px;top:0;width:1px;height:21px"></div>
<div class="rl" style="left:126.6px;top:3px">-50</div>
<div class="tk" style="left:133px;top:16px;width:1px;height:5px"></div>
<div class="tk" style="left:141px;top:16px;width:1px;height:5px"></div>
<div class="tk" style="left:149px;top:16px;width:1px;height:5px"></div>
<div class="tk" style="left:158px;top:16px;width:1px;height:5px"></div>
<div class="tk" style="left:166px;top:14px;width:1px;height:7px"></div>
<div class="tk" style="left:174px;top:16px;width:1px;height:5px"></div>
<div class="tk" style="left:183px;top:16px;width:1px;height:5px"></div>
<div class="tk" style="left:191px;top:16px;width:1px;height:5px"></div>
<div class="tk" style="left:199px;top:16px;width:1px;height:5px"></div>
<div class="tk" style="left:208px;top:0;width:1px;height:21px"></div>
<div class="rl" style="left:210.6px;top:3px">0</div>
<div class="tk" style="left:216px;top:16px;width:1px;height:5px"></div>
<div class="tk" style="left:224px;top:16px;width:1px;height:5px"></div>
<div class="tk" style="left:232px;top:16px;width:1px;height:5px"></div>
<div class="tk" style="left:241px;top:16px;width:1px;height:5px"></div>
<div class="tk" style="left:249px;top:14px;width:1px;height:7px"></div>
<div class="tk" style="left:257px;top:16px;width:1px;height:5px"></div>
<div class="tk" style="left:266px;top:16px;width:1px;height:5px"></div>
<div class="tk" style="left:274px;top:16px;width:1px;height:5px"></div>
<div class="tk" style="left:282px;top:16px;width:1px;height:5px"></div>
<div class="tk" style="left:291px;top:0;width:1px;height:21px"></div>
<div class="rl" style="left:293.6px;top:3px">50</div>
<div class="tk" style="left:299px;top:16px;width:1px;height:5px"></div>
<div class="tk" style="left:307px;top:16px;width:1px;height:5px"></div>
<div class="tk" style="left:316px;top:16px;width:1px;height:5px"></div>
<div class="tk" style="left:324px;top:16px;width:1px;height:5px"></div>
<div class="tk" style="left:332px;top:14px;width:1px;height:7px"></div>
<div class="tk" style="left:341px;top:16px;width:1px;height:5px"></div>
<div class="tk" style="left:349px;top:16px;width:1px;height:5px"></div>
<div class="tk" style="left:357px;top:16px;width:1px;height:5px"></div>
<div class="tk" style="left:365px;top:16px;width:1px;height:5px"></div>
<div class="tk" style="left:374px;top:0;width:1px;height:21px"></div>
<div class="rl" style="left:376.6px;top:3px">100</div>
<div class="tk" style="left:382px;top:16px;width:1px;height:5px"></div>
<div class="tk" style="left:390px;top:16px;width:1px;height:5px"></div>
<div class="tk" style="left:399px;top:16px;width:1px;height:5px"></div>
<div class="tk" style="left:407px;top:16px;width:1px;height:5px"></div>
<div class="tk" style="left:415px;top:14px;width:1px;height:7px"></div>
<div class="tk" style="left:424px;top:16px;width:1px;height:5px"></div>
<div class="tk" style="left:432px;top:16px;width:1px;height:5px"></div>
<div class="tk" style="left:440px;top:16px;width:1px;height:5px"></div>
<div class="tk" style="left:449px;top:16px;width:1px;height:5px"></div>
<div class="tk" style="left:457px;top:0;width:1px;height:21px"></div>
<div class="rl" style="left:459.6px;top:3px">150</div>
<div class="tk" style="left:465px;top:16px;width:1px;height:5px"></div>
<div class="tk" style="left:473px;top:16px;width:1px;height:5px"></div>
<div class="tk" style="left:482px;top:16px;width:1px;height:5px"></div>
<div class="tk" style="left:490px;top:16px;width:1px;height:5px"></div>
<div class="tk" style="left:498px;top:14px;width:1px;height:7px"></div>
<div class="tk" style="left:507px;top:16px;width:1px;height:5px"></div>
<div class="tk" style="left:515px;top:16px;width:1px;height:5px"></div>
<div class="tk" style="left:523px;top:16px;width:1px;height:5px"></div>
<div class="tk" style="left:532px;top:16px;width:1px;height:5px"></div>
<div class="tk" style="left:540px;top:0;width:1px;height:21px"></div>
<div class="rl" style="left:542.6px;top:3px">200</div>
<div class="tk" style="left:548px;top:16px;width:1px;height:5px"></div>
<div class="tk" style="left:557px;top:16px;width:1px;height:5px"></div>
<div class="tk" style="left:565px;top:16px;width:1px;height:5px"></div>
<div class="tk" style="left:573px;top:16px;width:1px;height:5px"></div>
<div class="tk" style="left:582px;top:14px;width:1px;height:7px"></div>
<div class="tk" style="left:590px;top:16px;width:1px;height:5px"></div>
<div class="tk" style="left:598px;top:16px;width:1px;height:5px"></div>
<div class="tk" style="left:606px;top:16px;width:1px;height:5px"></div>
<div class="tk" style="left:615px;top:16px;width:1px;height:5px"></div>
<div class="tk" style="left:623px;top:0;width:1px;height:21px"></div>
<div class="rl" style="left:625.6px;top:3px">250</div>
<div class="tk" style="left:631px;top:16px;width:1px;height:5px"></div>
<div class="tk" style="left:640px;top:16px;width:1px;height:5px"></div>
<div class="tk" style="left:648px;top:16px;width:1px;height:5px"></div>
<div class="tk" style="left:656px;top:16px;width:1px;height:5px"></div>
<div class="tk" style="left:665px;top:14px;width:1px;height:7px"></div>
<div class="tk" style="left:673px;top:16px;width:1px;height:5px"></div>
<div class="tk" style="left:681px;top:16px;width:1px;height:5px"></div>
<div class="tk" style="left:690px;top:16px;width:1px;height:5px"></div>
<div class="tk" style="left:698px;top:16px;width:1px;height:5px"></div>
<div class="tk" style="left:706px;top:0;width:1px;height:21px"></div>
<div class="rl" style="left:708.6px;top:3px">300</div>
<div class="tk" style="left:714px;top:16px;width:1px;height:5px"></div>
<div class="tk" style="left:723px;top:16px;width:1px;height:5px"></div>
<div class="tk" style="left:731px;top:16px;width:1px;height:5px"></div>
<div class="tk" style="left:739px;top:16px;width:1px;height:5px"></div>
<div class="tk" style="left:748px;top:14px;width:1px;height:7px"></div>
<div class="tk" style="left:756px;top:16px;width:1px;height:5px"></div>
<div class="tk" style="left:764px;top:16px;width:1px;height:5px"></div>
<div class="tk" style="left:773px;top:16px;width:1px;height:5px"></div>
<div class="tk" style="left:781px;top:16px;width:1px;height:5px"></div>
<div class="tk" style="left:789px;top:0;width:1px;height:21px"></div>
<div class="rl" style="left:791.6px;top:3px">350</div>
<div class="tk" style="left:798px;top:16px;width:1px;height:5px"></div>
<div class="tk" style="left:806px;top:16px;width:1px;height:5px"></div>
<div class="tk" style="left:814px;top:16px;width:1px;height:5px"></div>
<div class="tk" style="left:822px;top:16px;width:1px;height:5px"></div>
<div class="tk" style="left:831px;top:14px;width:1px;height:7px"></div>
<div class="tk" style="left:839px;top:16px;width:1px;height:5px"></div>
<div class="tk" style="left:847px;top:16px;width:1px;height:5px"></div>
<div class="tk" style="left:856px;top:16px;width:1px;height:5px"></div>
<div class="tk" style="left:864px;top:16px;width:1px;height:5px"></div>
<div class="tk" style="left:872px;top:0;width:1px;height:21px"></div>
<div class="rl" style="left:874.6px;top:3px">400</div>
<div class="tk" style="left:881px;top:16px;width:1px;height:5px"></div>
<div class="tk" style="left:889px;top:16px;width:1px;height:5px"></div>
<div class="a" style="left:208px;top:0;width:1px;height:21px;background:#f00"></div>
</div>
<div id="vruler" class="a">
<div class="tk" style="left:14px;top:1px;width:7px;height:1px"></div>
<div class="tk" style="left:16px;top:9px;width:5px;height:1px"></div>
<div class="tk" style="left:16px;top:17px;width:5px;height:1px"></div>
<div class="tk" style="left:16px;top:26px;width:5px;height:1px"></div>
<div class="tk" style="left:16px;top:34px;width:5px;height:1px"></div>
<div class="tk" style="left:0;top:42px;width:21px;height:1px"></div>
<div class="rl" style="left:3px;top:46px;transform-origin:0 0;transform:rotate(-90deg) translateX(-100%)">-50</div>
<div class="tk" style="left:16px;top:51px;width:5px;height:1px"></div>
<div class="tk" style="left:16px;top:59px;width:5px;height:1px"></div>
<div class="tk" style="left:16px;top:67px;width:5px;height:1px"></div>
<div class="tk" style="left:16px;top:76px;width:5px;height:1px"></div>
<div class="tk" style="left:14px;top:84px;width:7px;height:1px"></div>
<div class="tk" style="left:16px;top:92px;width:5px;height:1px"></div>
<div class="tk" style="left:16px;top:101px;width:5px;height:1px"></div>
<div class="tk" style="left:16px;top:109px;width:5px;height:1px"></div>
<div class="tk" style="left:16px;top:117px;width:5px;height:1px"></div>
<div class="tk" style="left:0;top:126px;width:21px;height:1px"></div>
<div class="rl" style="left:3px;top:130px;transform-origin:0 0;transform:rotate(-90deg) translateX(-100%)">0</div>
<div class="tk" style="left:16px;top:134px;width:5px;height:1px"></div>
<div class="tk" style="left:16px;top:142px;width:5px;height:1px"></div>
<div class="tk" style="left:16px;top:150px;width:5px;height:1px"></div>
<div class="tk" style="left:16px;top:159px;width:5px;height:1px"></div>
<div class="tk" style="left:14px;top:167px;width:7px;height:1px"></div>
<div class="tk" style="left:16px;top:175px;width:5px;height:1px"></div>
<div class="tk" style="left:16px;top:184px;width:5px;height:1px"></div>
<div class="tk" style="left:16px;top:192px;width:5px;height:1px"></div>
<div class="tk" style="left:16px;top:200px;width:5px;height:1px"></div>
<div class="tk" style="left:0;top:209px;width:21px;height:1px"></div>
<div class="rl" style="left:3px;top:213px;transform-origin:0 0;transform:rotate(-90deg) translateX(-100%)">50</div>
<div class="tk" style="left:16px;top:217px;width:5px;height:1px"></div>
<div class="tk" style="left:16px;top:225px;width:5px;height:1px"></div>
<div class="tk" style="left:16px;top:234px;width:5px;height:1px"></div>
<div class="tk" style="left:16px;top:242px;width:5px;height:1px"></div>
<div class="tk" style="left:14px;top:250px;width:7px;height:1px"></div>
<div class="tk" style="left:16px;top:258px;width:5px;height:1px"></div>
<div class="tk" style="left:16px;top:267px;width:5px;height:1px"></div>
<div class="tk" style="left:16px;top:275px;width:5px;height:1px"></div>
<div class="tk" style="left:16px;top:283px;width:5px;height:1px"></div>
<div class="tk" style="left:0;top:292px;width:21px;height:1px"></div>
<div class="rl" style="left:3px;top:296px;transform-origin:0 0;transform:rotate(-90deg) translateX(-100%)">100</div>
<div class="tk" style="left:16px;top:300px;width:5px;height:1px"></div>
<div class="tk" style="left:16px;top:308px;width:5px;height:1px"></div>
<div class="tk" style="left:16px;top:317px;width:5px;height:1px"></div>
<div class="tk" style="left:16px;top:325px;width:5px;height:1px"></div>
<div class="tk" style="left:14px;top:333px;width:7px;height:1px"></div>
<div class="tk" style="left:16px;top:342px;width:5px;height:1px"></div>
<div class="tk" style="left:16px;top:350px;width:5px;height:1px"></div>
<div class="tk" style="left:16px;top:358px;width:5px;height:1px"></div>
<div class="tk" style="left:16px;top:367px;width:5px;height:1px"></div>
<div class="tk" style="left:0;top:375px;width:21px;height:1px"></div>
<div class="rl" style="left:3px;top:379px;transform-origin:0 0;transform:rotate(-90deg) translateX(-100%)">150</div>
<div class="tk" style="left:16px;top:383px;width:5px;height:1px"></div>
<div class="tk" style="left:16px;top:391px;width:5px;height:1px"></div>
<div class="tk" style="left:16px;top:400px;width:5px;height:1px"></div>
<div class="tk" style="left:16px;top:408px;width:5px;height:1px"></div>
<div class="tk" style="left:14px;top:416px;width:7px;height:1px"></div>
<div class="tk" style="left:16px;top:425px;width:5px;height:1px"></div>
<div class="tk" style="left:16px;top:433px;width:5px;height:1px"></div>
<div class="tk" style="left:16px;top:441px;width:5px;height:1px"></div>
<div class="tk" style="left:16px;top:450px;width:5px;height:1px"></div>
<div class="tk" style="left:0;top:458px;width:21px;height:1px"></div>
<div class="rl" style="left:3px;top:462px;transform-origin:0 0;transform:rotate(-90deg) translateX(-100%)">200</div>
<div class="tk" style="left:16px;top:466px;width:5px;height:1px"></div>
<div class="tk" style="left:16px;top:475px;width:5px;height:1px"></div>
<div class="tk" style="left:16px;top:483px;width:5px;height:1px"></div>
<div class="tk" style="left:16px;top:491px;width:5px;height:1px"></div>
<div class="tk" style="left:14px;top:499px;width:7px;height:1px"></div>
<div class="tk" style="left:16px;top:508px;width:5px;height:1px"></div>
<div class="tk" style="left:16px;top:516px;width:5px;height:1px"></div>
<div class="tk" style="left:16px;top:524px;width:5px;height:1px"></div>
<div class="tk" style="left:16px;top:533px;width:5px;height:1px"></div>
<div class="tk" style="left:0;top:541px;width:21px;height:1px"></div>
<div class="rl" style="left:3px;top:545px;transform-origin:0 0;transform:rotate(-90deg) translateX(-100%)">250</div>
<div class="tk" style="left:16px;top:549px;width:5px;height:1px"></div>
<div class="tk" style="left:16px;top:558px;width:5px;height:1px"></div>
<div class="tk" style="left:16px;top:566px;width:5px;height:1px"></div>
<div class="tk" style="left:16px;top:574px;width:5px;height:1px"></div>
<div class="tk" style="left:14px;top:583px;width:7px;height:1px"></div>
<div class="tk" style="left:16px;top:591px;width:5px;height:1px"></div>
<div class="tk" style="left:16px;top:599px;width:5px;height:1px"></div>
<div class="a" style="left:0;top:0;width:21px;height:1px;background:#f00"></div>
</div>
<div id="canvas" class="a">
<div class="a" style="left:195px;top:134px;width:494px;height:349px;background:#979797"></div>
<div class="a" style="left:187px;top:126px;width:494px;height:350px;background:#fff"></div>
</div>
<div id="rpanel" class="a">
</div>
<svg class="a" style="left:1276px;top:93px" width="30" height="15" viewBox="1276 93 30 15"><rect x="1278.5" y="95.5" width="10" height="10" rx="2.5" fill="none" stroke="#666" stroke-width="1"/><rect x="1282.5" y="97.5" width="4" height="4" rx="1" fill="none" stroke="#666" stroke-width="1"/><rect x="1280.5" y="99.5" width="4" height="4" rx="1" fill="#f4f2ef" stroke="#666" stroke-width="1"/><rect x="1292.5" y="95.5" width="10" height="10" rx="2.5" fill="none" stroke="#666" stroke-width="1"/><path d="M1295 98L1300 103M1300 98L1295 103" stroke="#555" stroke-width="1.9"/></svg>
<div class="a" style="left:936px;top:110px;width:369px;height:104px;border:1px solid #b4afa9;background:#fff"></div>
<div class="a" style="left:937px;top:111px;width:367px;height:20px;background:linear-gradient(#faf8f6,#efedea);border-bottom:1px solid #b4afa9"></div>
<div class="a" style="left:993px;top:111px;width:1px;height:20px;background:#c3beb8"></div>
<div class="a" style="left:1050px;top:111px;width:1px;height:20px;background:#c3beb8"></div>
<svg class="a" style="left:939px;top:114px" width="18" height="14" viewBox="0 0 18 14"><path d="M1.5 7C4 3 7 2 9 2S14 3 16.5 7C14 11 11 12 9 12S4 11 1.5 7Z" fill="#f0f0f0" stroke="#9a9a9a" stroke-width="1"/><circle cx="8.5" cy="7" r="3.3" fill="#8e8e8e"/><circle cx="8.5" cy="7" r="1.6" fill="#222"/><path d="M2 4.5C5 1 13 1 16 5" fill="none" stroke="#b0b0b0" stroke-width="0.8"/></svg>
<svg class="a" style="left:997px;top:113px" width="14" height="17" viewBox="0 0 14 17"><path d="M3.8 8V5.2C3.8 3 5.2 1.6 7 1.6S10.2 3 10.2 5.2V8" fill="none" stroke="#6b6b6b" stroke-width="1.6"/><rect x="1.8" y="7.8" width="10.4" height="7.6" rx="1.6" fill="#666"/></svg>
<div class="a" style="left:1114px;top:216px;width:1px;height:1px;background:#a09c97"></div>
<div class="a" style="left:933px;top:397px;width:1px;height:1px;background:#999"></div>
<div class="a" style="left:1117px;top:216px;width:1px;height:1px;background:#a09c97"></div>
<div class="a" style="left:933px;top:400px;width:1px;height:1px;background:#999"></div>
<div class="a" style="left:1120px;top:216px;width:1px;height:1px;background:#a09c97"></div>
<div class="a" style="left:933px;top:403px;width:1px;height:1px;background:#999"></div>
<div class="a" style="left:1123px;top:216px;width:1px;height:1px;background:#a09c97"></div>
<div class="a" style="left:933px;top:406px;width:1px;height:1px;background:#999"></div>
<div class="a" style="left:1126px;top:216px;width:1px;height:1px;background:#a09c97"></div>
<div class="a" style="left:933px;top:409px;width:1px;height:1px;background:#999"></div>
<div class="a" style="left:1129px;top:216px;width:1px;height:1px;background:#a09c97"></div>
<div class="a" style="left:933px;top:412px;width:1px;height:1px;background:#999"></div>
<div class="a" style="left:936px;top:247px;width:369px;height:1px;background:#bdb8b2"></div>
<div class="a" style="left:936px;top:248px;width:369px;height:1px;background:#fbfaf9"></div>
<div class="a" style="left:936px;top:222px;width:72px;height:26px;border:1px solid #bdb8b2;border-radius:3px 3px 0 0;background:linear-gradient(#e0dcd8,#dcd8d3)"></div>
<div class="a" style="left:1139px;top:222px;width:70px;height:26px;border:1px solid #bdb8b2;border-radius:3px 3px 0 0;background:linear-gradient(#e0dcd8,#dcd8d3)"></div>
<div class="a" style="left:1209px;top:222px;width:59px;height:26px;border:1px solid #bdb8b2;border-radius:3px 3px 0 0;background:linear-gradient(#e0dcd8,#dcd8d3)"></div>
<div class="a" style="left:1007px;top:220px;width:132px;height:29px;border:1px solid #b9b4ae;border-bottom:none;border-radius:3px 3px 0 0;background:linear-gradient(#f7f5f3,#efebe7)"></div>
<svg class="a" style="left:1276px;top:251px" width="30" height="15" viewBox="1276 251 30 15"><rect x="1278.5" y="253.5" width="10" height="10" rx="2.5" fill="none" stroke="#666" stroke-width="1"/><rect x="1282.5" y="255.5" width="4" height="4" rx="1" fill="none" stroke="#666" stroke-width="1"/><rect x="1280.5" y="257.5" width="4" height="4" rx="1" fill="#f4f2ef" stroke="#666" stroke-width="1"/><rect x="1292.5" y="253.5" width="10" height="10" rx="2.5" fill="none" stroke="#666" stroke-width="1"/><path d="M1295 256L1300 261M1300 256L1295 261" stroke="#555" stroke-width="1.9"/></svg>
<div id="status" class="a"></div>
<div class="a" style="left:1034px;top:719px;width:141px;height:25px;border:1px solid #b6b1ab;border-radius:3px;background:#fff"></div>
<div class="a" style="left:1154px;top:720px;width:20px;height:23px;border-left:1px solid #c8c3bd;border-radius:0 2px 2px 0;background:linear-gradient(#f8f7f5,#ebe8e4)"></div>
<svg class="a" style="left:1158px;top:728px" width="12" height="8"><path d="M1 1H11L6 7Z" fill="#4a4a4a"/></svg>
<div class="a" style="left:1182px;top:729px;width:98px;height:5px;border:1px solid #b9b4ae;border-radius:3px;background:linear-gradient(#d9d5d0,#e6e3df)"></div>
<div class="a" style="left:1182px;top:729px;width:5px;height:5px;border-radius:3px 0 0 3px;background:#3d8ee0"></div>
<div class="a" style="left:1185px;top:725px;width:13px;height:13px;border:1px solid #a8a39d;border-radius:3px;background:linear-gradient(#ffffff,#ebe8e4)"></div>
<div class="a" style="left:1302px;top:734px;width:1px;height:1px;background:#b5b0aa"></div>
<div class="a" style="left:1299px;top:737px;width:1px;height:1px;background:#b5b0aa"></div>
<div class="a" style="left:1302px;top:737px;width:1px;height:1px;background:#b5b0aa"></div>
<div class="a" style="left:1296px;top:740px;width:1px;height:1px;background:#b5b0aa"></div>
<div class="a" style="left:1299px;top:740px;width:1px;height:1px;background:#b5b0aa"></div>
<div class="a" style="left:1302px;top:740px;width:1px;height:1px;background:#b5b0aa"></div>
<div class="a" style="left:1293px;top:743px;width:1px;height:1px;background:#b5b0aa"></div>
<div class="a" style="left:1296px;top:743px;width:1px;height:1px;background:#b5b0aa"></div>
<div class="a" style="left:1299px;top:743px;width:1px;height:1px;background:#b5b0aa"></div>
<div class="a" style="left:1302px;top:743px;width:1px;height:1px;background:#b5b0aa"></div>
<span class="a" style="left:621.5px;top:7.24px;font-size:15px;line-height:15px;font-weight:bold;color:#dfdbd2;letter-spacing:-0.22px;white-space:nowrap;-webkit-text-stroke:0px #dfdbd2;text-shadow:0 0 2px #1e1d1a">*Alaska1</span>
<span class="a" style="left:8.8px;top:34.35px;font-size:14px;line-height:14px;font-weight:normal;color:#151515;letter-spacing:0.98px;white-space:nowrap;-webkit-text-stroke:0.25px #151515">Layout</span>
<span class="a" style="left:68.9px;top:35.35px;font-size:14px;line-height:14px;font-weight:normal;color:#151515;letter-spacing:1.327px;white-space:nowrap;-webkit-text-stroke:0.25px #151515">Edit</span>
<span class="a" style="left:111.9px;top:35.35px;font-size:14px;line-height:14px;font-weight:normal;color:#151515;letter-spacing:0.847px;white-space:nowrap;-webkit-text-stroke:0.25px #151515">View</span>
<span class="a" style="left:158.6px;top:34.35px;font-size:14px;line-height:14px;font-weight:normal;color:#151515;letter-spacing:1.2px;white-space:nowrap;-webkit-text-stroke:0.25px #151515">Items</span>
<span class="a" style="left:212.3px;top:35.35px;font-size:14px;line-height:14px;font-weight:normal;color:#151515;letter-spacing:0.831px;white-space:nowrap;-webkit-text-stroke:0.25px #151515">Add Item</span>
<span class="a" style="left:289.3px;top:35.35px;font-size:14px;line-height:14px;font-weight:normal;color:#151515;letter-spacing:0.84px;white-space:nowrap;-webkit-text-stroke:0.25px #151515">Atlas</span>
<span class="a" style="left:337.9px;top:35.35px;font-size:14px;line-height:14px;font-weight:normal;color:#151515;letter-spacing:0.98px;white-space:nowrap;-webkit-text-stroke:0.25px #151515">Settings</span>
<span class="a" style="left:939.9px;top:94.36px;font-size:14px;line-height:14px;font-weight:normal;color:#151515;letter-spacing:1.02px;white-space:nowrap;-webkit-text-stroke:0.25px #151515">Items</span>
<span class="a" style="left:1052.9px;top:115.36px;font-size:14px;line-height:14px;font-weight:normal;color:#151515;letter-spacing:1.38px;white-space:nowrap;-webkit-text-stroke:0.25px #151515">Item</span>
<span class="a" style="left:949.1px;top:229.35px;font-size:14px;line-height:14px;font-weight:normal;color:#151515;letter-spacing:0.484px;white-space:nowrap;-webkit-text-stroke:0.25px #151515">Layout</span>
<span class="a" style="left:1019.8px;top:228.35px;font-size:14px;line-height:14px;font-weight:normal;color:#151515;letter-spacing:0.786px;white-space:nowrap;-webkit-text-stroke:0.25px #151515">Item Properties</span>
<span class="a" style="left:1150.85px;top:229.35px;font-size:14px;line-height:14px;font-weight:normal;color:#151515;letter-spacing:0.204px;white-space:nowrap;-webkit-text-stroke:0.25px #151515">Guides</span>
<span class="a" style="left:1220.9px;top:229.35px;font-size:14px;line-height:14px;font-weight:normal;color:#151515;letter-spacing:1.0px;white-space:nowrap;-webkit-text-stroke:0.25px #151515">Atlas</span>
<span class="a" style="left:939.9px;top:253.35px;font-size:14px;line-height:14px;font-weight:normal;color:#151515;letter-spacing:0.826px;white-space:nowrap;-webkit-text-stroke:0.25px #151515">Item Properties</span>
<span class="a" style="left:715.8px;top:725.36px;font-size:14px;line-height:14px;font-weight:normal;color:#1a1a1a;letter-spacing:0.593px;white-space:nowrap;-webkit-text-stroke:0.25px #1a1a1a">x: 0 mm</span>
<span class="a" style="left:823.4px;top:725.36px;font-size:14px;line-height:14px;font-weight:normal;color:#1a1a1a;letter-spacing:0.26px;white-space:nowrap;-webkit-text-stroke:0.25px #1a1a1a">y: 0 mm</span>
<span class="a" style="left:926.9px;top:725.36px;font-size:14px;line-height:14px;font-weight:normal;color:#1a1a1a;letter-spacing:0.38px;white-space:nowrap;-webkit-text-stroke:0.25px #1a1a1a">page: 1</span>
<span class="a" style="left:1037.5px;top:725.36px;font-size:14px;line-height:14px;font-weight:normal;color:#1a1a1a;letter-spacing:0.56px;white-space:nowrap;-webkit-text-stroke:0.25px #1a1a1a">44.0%</span>
<div class="a" style="left:11px;top:47px;width:8px;height:2px;background:#151515"></div>
<div class="a" style="left:71px;top:47px;width:8px;height:2px;background:#151515"></div>
<div class="a" style="left:112px;top:47px;width:10px;height:2px;background:#151515"></div>
<div class="a" style="left:161px;top:47px;width:3px;height:2px;background:#151515"></div>
<div class="a" style="left:212px;top:47px;width:10px;height:2px;background:#151515"></div>
</body></html>
